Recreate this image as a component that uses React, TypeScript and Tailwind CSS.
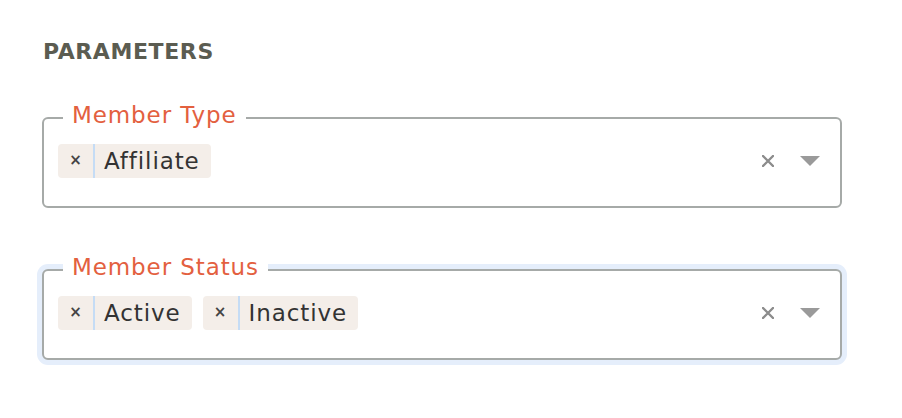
// Report parameters panel: two multi-select fields with outlined labels.
const font = { fontFamily: '"DejaVu Sans", "Liberation Sans", sans-serif' };

type Field = { label: string; values: string[]; focused?: boolean };

const fields: Field[] = [
  { label: "Member Type", values: ["Affiliate"] },
  { label: "Member Status", values: ["Active", "Inactive"], focused: true },
];

function Chip({ text }: { text: string }) {
  return (
    <div className="flex h-[34px] items-stretch rounded-[4px] bg-[#f4eee9]">
      <span className="flex w-[35px] items-center justify-center pb-[1px] text-[15px] font-bold text-[#444]">×</span>
      <span className="w-[2px] bg-[#c5dcf5]" />
      <span className="flex items-center pl-[9px] pr-[11px] text-[23px] tracking-[0.9px] text-[#333]">
        {text}
      </span>
    </div>
  );
}

function MultiSelect({ label, values, focused }: Field) {
  return (
    <div
      className={[
        "relative h-[91px] w-[800px] rounded-[6px] border-2 border-[#a6aaa8] bg-white",
        focused ? "shadow-[0_0_0_5px_#e5eefb]" : "",
      ].join(" ")}
    >
      {/* floating label sits over the top border */}
      <span className="absolute -top-[17px] left-[19px] bg-white px-[9px] text-[23px] leading-[27px] tracking-[0.9px] text-[#e3603f]">
        {label}
      </span>
      <div className="flex items-center pl-[14px] pr-[20px] pt-[25px]">
        <div className="flex flex-1 gap-[11px]">
          {values.map((v) => (
            <Chip key={v} text={v} />
          ))}
        </div>
        <svg width="12" height="12" viewBox="0 0 12 12" className="mr-[26px]">
          <path d="M1 1 L11 11 M11 1 L1 11" stroke="#8c8c8c" strokeWidth="2.4" strokeLinecap="round" />
        </svg>
        <svg width="20" height="10" viewBox="0 0 20 10">
          <path d="M0 0 H20 L10 10 Z" fill="#9a9a9a" />
        </svg>
      </div>
    </div>
  );
}

export default function App() {
  return (
    <div className="h-[418px] w-[902px] bg-white pl-[42px] pt-[38px]" style={font}>
      <h2 className="pl-[1px] text-[22px] font-bold leading-[28px] tracking-[0.6px] text-[#5b5c51]">
        PARAMETERS
      </h2>
      <div className="mt-[51px] flex flex-col gap-[61px]">
        {fields.map((f) => (
          <MultiSelect key={f.label} {...f} />
        ))}
      </div>
    </div>
  );
}
